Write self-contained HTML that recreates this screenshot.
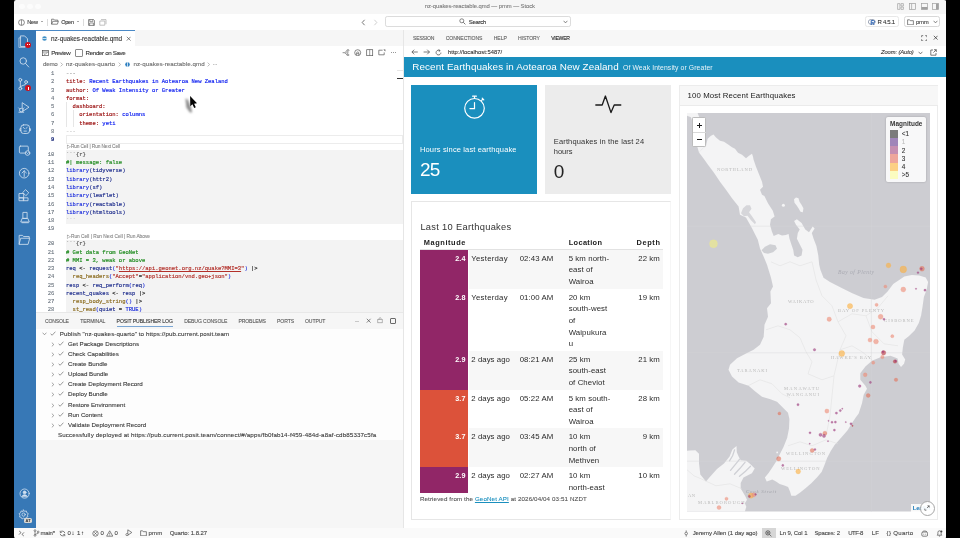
<!DOCTYPE html><html lang="en"><head><meta charset="utf-8"><title>nz-quakes-reactable.qmd — pmm — Stock</title><style>
html,body{margin:0;padding:0;background:#000;}
body{width:960px;height:538px;position:relative;overflow:hidden;font-family:"Liberation Sans",sans-serif;}
.a{position:absolute;display:block}
.t{position:absolute;white-space:pre;}
</style></head><body><div id="win" style="position:absolute;left:0;top:0;width:960px;height:538px;will-change:transform"><div class="a" style="left:14px;top:0px;width:932px;height:538px;background:#ffffff;"></div><div class="a" style="left:14px;top:0px;width:932px;height:13.9px;background:#f6f6f6;"></div><div class="a" style="left:19.4px;top:3.6px;width:5.2px;height:5.2px;border-radius:50%;background:#fcfcfc"></div><div class="a" style="left:27.4px;top:3.6px;width:5.2px;height:5.2px;border-radius:50%;background:#fcfcfc"></div><div class="a" style="left:35.4px;top:3.6px;width:5.2px;height:5.2px;border-radius:50%;background:#fcfcfc"></div><span class="t" style="top:3px;font-size:5.9px;line-height:6px;color:#7c7c7c;letter-spacing:-0.067px;-webkit-text-stroke:0.1px;left:424.8px;">nz-quakes-reactable.qmd — pmm — Stock</span><svg class="a" style="left:897.0px;top:3px" width="7" height="7" viewBox="0 0 7 7"><path d="M0.6 0.6h2.3v5.8h-2.3z M4 0.6h2.4v2.4h-2.4z M4 4h2.4v2.4h-2.4z" fill="none" stroke="#a0a0a0" stroke-width="0.7"/></svg><svg class="a" style="left:908.5px;top:3px" width="7" height="7" viewBox="0 0 7 7"><rect x="0.5" y="0.6" width="6" height="5.8" fill="none" stroke="#a0a0a0" stroke-width="0.7"/><path d="M2.6 0.6v5.8" stroke="#a0a0a0" stroke-width="0.7"/></svg><svg class="a" style="left:920.7px;top:3px" width="7" height="7" viewBox="0 0 7 7"><rect x="0.5" y="0.6" width="6" height="5.8" fill="none" stroke="#a0a0a0" stroke-width="0.7"/><rect x="0.5" y="4" width="6" height="2.4" fill="#a0a0a0"/></svg><svg class="a" style="left:932.2px;top:3px" width="7" height="7" viewBox="0 0 7 7"><rect x="0.5" y="0.6" width="6" height="5.8" fill="none" stroke="#a0a0a0" stroke-width="0.7"/><rect x="4" y="0.6" width="2.5" height="5.8" fill="#a0a0a0"/></svg><div class="a" style="left:14px;top:13.9px;width:932px;height:16.1px;background:#ffffff;"></div><svg class="a" style="left:17.6px;top:18.6px" width="7" height="7" viewBox="0 0 7 7"><circle cx="3.5" cy="3.5" r="2.9" fill="none" stroke="#555" stroke-width="0.7"/><path d="M3.5 0.8v5.4" stroke="#555" stroke-width="0.6"/></svg><span class="t" style="top:19px;font-size:5.6px;line-height:6px;color:#333;letter-spacing:-0.202px;-webkit-text-stroke:0.1px;left:27.2px;">New</span><div class="a" style="left:40.6px;top:21.4px;border-left:1.3px solid transparent;border-right:1.3px solid transparent;border-top:1.6px solid #555"></div><div class="a" style="left:47.2px;top:18.5px;width:0.5px;height:7.5px;background:#dcdcdc;"></div><svg class="a" style="left:51.2px;top:18.4px" width="8" height="7" viewBox="0 0 8 7"><path d="M0.6 6.2v-5h2.2l0.8 0.9h3.2v1.2M0.6 6.2l1.2-2.9h5.6l-1 2.9z" fill="none" stroke="#555" stroke-width="0.7" stroke-linejoin="round"/></svg><span class="t" style="top:19px;font-size:5.6px;line-height:6px;color:#333;letter-spacing:-0.329px;-webkit-text-stroke:0.1px;left:61.3px;">Open</span><div class="a" style="left:76.6px;top:21.4px;border-left:1.3px solid transparent;border-right:1.3px solid transparent;border-top:1.6px solid #555"></div><div class="a" style="left:83.3px;top:18.5px;width:0.5px;height:7.5px;background:#dcdcdc;"></div><svg class="a" style="left:87.6px;top:18.6px" width="7" height="7" viewBox="0 0 7 7"><path d="M0.6 0.6h5l0.8 0.8v5h-5.8z" fill="none" stroke="#555" stroke-width="0.7"/><path d="M1.8 0.6v2h3v-2M1.6 6.4v-2.4h3.8v2.4" fill="none" stroke="#555" stroke-width="0.6"/></svg><svg class="a" style="left:99.2px;top:18.4px" width="8" height="8" viewBox="0 0 8 8"><path d="M2 1.6h5v4.6M0.8 3h5v4.2h-5z" fill="none" stroke="#a8a8a8" stroke-width="0.7"/></svg><svg class="a" style="left:360.5px;top:18.7px" width="5" height="7" viewBox="0 0 5 7"><path d="M3.6 0.8L1.2 3.5L3.6 6.2" fill="none" stroke="#555" stroke-width="0.8"/></svg><svg class="a" style="left:372.7px;top:18.7px" width="5" height="7" viewBox="0 0 5 7"><path d="M1.4 0.8L3.8 3.5L1.4 6.2" fill="none" stroke="#c4c4c4" stroke-width="0.8"/></svg><div class="a" style="left:385.2px;top:16.3px;width:185.8px;height:10.7px;box-sizing:border-box;border:0.7px solid #dcdcdc;border-radius:2.2px;background:#fff"></div><svg class="a" style="left:459px;top:18.4px" width="7" height="7" viewBox="0 0 7 7"><circle cx="2.8" cy="2.8" r="2" fill="none" stroke="#555" stroke-width="0.7"/><path d="M4.3 4.3L6.4 6.4" stroke="#555" stroke-width="0.8"/></svg><span class="t" style="top:19px;font-size:6px;line-height:6px;color:#333;letter-spacing:-0.283px;-webkit-text-stroke:0.1px;left:468.7px;">Search</span><svg class="a" style="left:562.9px;top:19.7px" width="5" height="4" viewBox="0 0 5 4"><path d="M0.6 0.8L2.5 2.9L4.4 0.8" fill="none" stroke="#555" stroke-width="0.7"/></svg><div class="a" style="left:864.5px;top:16.3px;width:34.3px;height:11px;box-sizing:border-box;border:0.7px solid #e8e8e8;border-radius:2.4px;background:#fff"></div><svg class="a" style="left:868px;top:18.8px" width="8" height="6.6" viewBox="0 0 8 6.6"><ellipse cx="3.8" cy="2.9" rx="3.5" ry="2.5" fill="none" stroke="#9aa3b5" stroke-width="1"/><path d="M3.2 1.6h2.3a1.1 1.1 0 0 1 0 2.2h-2.3zM3.2 3.8v2.4M4.6 3.8l1.7 2.4" fill="none" stroke="#2c63b3" stroke-width="1"/></svg><span class="t" style="top:19px;font-size:6px;line-height:6px;color:#333;letter-spacing:-0.31px;-webkit-text-stroke:0.1px;left:877.5px;">R 4.5.1</span><div class="a" style="left:903.8px;top:16.3px;width:36.6px;height:11px;box-sizing:border-box;border:0.7px solid #d8d8d8;border-radius:2.4px;background:#fff"></div><svg class="a" style="left:907.2px;top:18.9px" width="7" height="6.4" viewBox="0 0 7 6.4"><path d="M0.6 5.8v-5h2l0.7 0.9h3.1v4.1z" fill="none" stroke="#555" stroke-width="0.7" stroke-linejoin="round"/></svg><span class="t" style="top:19px;font-size:6px;line-height:6px;color:#444;letter-spacing:-0.322px;-webkit-text-stroke:0.1px;left:916px;">pmm</span><svg class="a" style="left:932.5px;top:20.2px" width="5" height="4" viewBox="0 0 5 4"><path d="M0.6 0.8L2.5 2.9L4.4 0.8" fill="none" stroke="#555" stroke-width="0.7"/></svg><div class="a" style="left:14px;top:30px;width:21.8px;height:497.8px;background:#3778b6;"></div><svg class="a" style="left:16.4px;top:33.6px" width="14.399999999999999" height="14.399999999999999" viewBox="0 0 12 12" fill="none" stroke="#d3e1f0" stroke-width="0.7" stroke-linecap="round" stroke-linejoin="round"><path d="M4 1.6h3.2l2.4 2.4v6.4h-5.6z"/><path d="M4 3.2h-1.6v8h5.2v-0.8" opacity="0.75"/></svg><div class="a" style="left:25.3px;top:41.7px;width:6px;height:6px;border-radius:50%;background:#d2101c"></div><div class="a" style="left:27.0px;top:44px;width:1.1px;height:1.4px;background:#fff"></div><div class="a" style="left:28.7px;top:44px;width:1.1px;height:1.4px;background:#fff"></div><svg class="a" style="left:17.0px;top:54.8px" width="14.399999999999999" height="14.399999999999999" viewBox="0 0 12 12" fill="none" stroke="#d3e1f0" stroke-width="0.7" stroke-linecap="round" stroke-linejoin="round"><circle cx="5.2" cy="5" r="2.7"/><path d="M7.2 7.1L9.8 10"/></svg><svg class="a" style="left:16.4px;top:77.3px" width="14.399999999999999" height="14.399999999999999" viewBox="0 0 12 12" fill="none" stroke="#d3e1f0" stroke-width="0.7" stroke-linecap="round" stroke-linejoin="round"><circle cx="3.6" cy="2.4" r="1.2"/><circle cx="3.6" cy="9.6" r="1.2"/><circle cx="8.4" cy="4.2" r="1.2"/><path d="M3.6 3.6v4.8M8.4 5.4c0 2-4.8 1.4-4.8 2.8"/></svg><div class="a" style="left:25.3px;top:85.4px;width:6px;height:6px;border-radius:50%;background:#d2101c"></div><div class="a" style="left:27.6px;top:87.2px;width:1.4px;height:2.4px;background:#fff"></div><svg class="a" style="left:17.4px;top:99.8px" width="14.399999999999999" height="14.399999999999999" viewBox="0 0 12 12" fill="none" stroke="#d3e1f0" stroke-width="0.7" stroke-linecap="round" stroke-linejoin="round"><path d="M4.6 2.4l5.4 3.6l-5.4 3.6z"/><circle cx="3.6" cy="8.4" r="1.5" fill="#3778b6"/><path d="M1.6 10.2h4M2 7.2l-0.6-0.6M5.2 7.2l0.6-0.6"/></svg><svg class="a" style="left:17.5px;top:121.6px" width="14.399999999999999" height="14.399999999999999" viewBox="0 0 12 12" fill="none" stroke="#d3e1f0" stroke-width="0.7" stroke-linecap="round" stroke-linejoin="round"><rect x="2.4" y="2.4" width="7.2" height="7.2" rx="2.2"/><path d="M4.3 4.5l1.1 0.9M7.7 4.5l-1.1 0.9M5 7.6h2M2.4 5.6h-0.8v1.6h0.8M9.6 5.6h0.8v1.6h-0.8"/></svg><svg class="a" style="left:16.8px;top:143.2px" width="14.399999999999999" height="14.399999999999999" viewBox="0 0 12 12" fill="none" stroke="#d3e1f0" stroke-width="0.7" stroke-linecap="round" stroke-linejoin="round"><rect x="2" y="2.6" width="7.4" height="5.8" rx="0.8"/><circle cx="8.8" cy="8.4" r="1.9" fill="#3778b6"/><path d="M8 8l0.8 0.8l0.8-0.8"/></svg><svg class="a" style="left:17.0px;top:165.7px" width="14.399999999999999" height="14.399999999999999" viewBox="0 0 12 12" fill="none" stroke="#d3e1f0" stroke-width="0.7" stroke-linecap="round" stroke-linejoin="round"><circle cx="6" cy="6" r="4"/><path d="M6 8.8V4M4.2 5.8L6 4L7.8 5.8"/></svg><svg class="a" style="left:17.1px;top:187.7px" width="14.399999999999999" height="14.399999999999999" viewBox="0 0 12 12" fill="none" stroke="#d3e1f0" stroke-width="0.7" stroke-linecap="round" stroke-linejoin="round"><path d="M2 4.6h3.6v3.6h-3.6zM2 8.2h3.6v2.4h-3.6zM5.6 8.2h3.6v2.4h-3.6zM7.4 1.6l2.4 2.4l-2.4 2.4l-2.4-2.4z"/></svg><svg class="a" style="left:17.5px;top:209.8px" width="14.399999999999999" height="14.399999999999999" viewBox="0 0 12 12" fill="none" stroke="#d3e1f0" stroke-width="0.7" stroke-linecap="round" stroke-linejoin="round"><path d="M4.4 2h3.2v5h-3.2zM2.6 10h6.8l-1.2-3h-4.4zM3.4 10.6h5.2"/></svg><svg class="a" style="left:17.4px;top:232.0px" width="14.399999999999999" height="14.399999999999999" viewBox="0 0 12 12" fill="none" stroke="#d3e1f0" stroke-width="0.7" stroke-linecap="round" stroke-linejoin="round"><path d="M1.8 10v-7.2h2.8l0.9 1h4.7v1.4M1.8 10l1.3-4.8h7.5l-1.3 4.8z"/></svg><svg class="a" style="left:18.1px;top:487.2px" width="13.200000000000001" height="13.200000000000001" viewBox="0 0 12 12" fill="none" stroke="#d3e1f0" stroke-width="0.7" stroke-linecap="round" stroke-linejoin="round"><circle cx="6" cy="6" r="4.2"/><circle cx="6" cy="4.9" r="1.3" fill="#d3e1f0"/><path d="M3.6 8.5c0.6-1.9 4.2-1.9 4.8 0z" fill="#d3e1f0"/></svg><svg class="a" style="left:17.2px;top:508.0px" width="13.200000000000001" height="13.200000000000001" viewBox="0 0 12 12" fill="none" stroke="#d3e1f0" stroke-width="0.7" stroke-linecap="round" stroke-linejoin="round"><circle cx="6" cy="6" r="1.5"/><path d="M6 1.8l0.9 1.3l1.6-0.4l0.4 1.6l1.4 0.8l-0.8 1.4l0.4 1.6l-1.5 0.4l-0.8 1.5l-1.5-0.8l-1.5 0.8l-0.8-1.5l-1.5-0.4l0.4-1.6l-0.8-1.4l1.4-0.8l0.4-1.6l1.5 0.4z"/></svg><div class="a" style="left:24.2px;top:517.6px;width:7.8px;height:5.4px;border-radius:1.6px;background:#d9d7d3"></div><span class="t" style="top:518px;font-size:4px;line-height:5px;color:#333;font-weight:700;letter-spacing:0.353px;left:25.4px;">AT</span><div class="a" style="left:14px;top:527.6px;width:932px;height:10.4px;background:#fafafa;"></div><svg class="a" style="left:18px;top:529.6px" width="7" height="7" viewBox="0 0 7 7"><path d="M1 4.6L3 2.6M3 2.6L1.2 1M4 4.4L6 2.4M4 4.4L5.8 6" fill="none" stroke="#444" stroke-width="0.7"/></svg><svg class="a" style="left:32.6px;top:529.2px" width="7" height="8" viewBox="0 0 7 8"><circle cx="2" cy="1.6" r="0.9" fill="none" stroke="#444" stroke-width="0.6"/><circle cx="2" cy="6.4" r="0.9" fill="none" stroke="#444" stroke-width="0.6"/><circle cx="5.2" cy="3" r="0.9" fill="none" stroke="#444" stroke-width="0.6"/><path d="M2 2.5v3M5.2 3.9c0 1.4-3.2 0.6-3.2 1.8" fill="none" stroke="#444" stroke-width="0.6"/></svg><span class="t" style="top:530px;font-size:6px;line-height:6px;color:#444;letter-spacing:-0.236px;-webkit-text-stroke:0.1px;left:40.6px;">main*</span><svg class="a" style="left:58.6px;top:529.6px" width="7" height="7" viewBox="0 0 7 7"><path d="M5.8 3.2a2.4 2.4 0 0 0-4.4-1M1.2 3.8a2.4 2.4 0 0 0 4.4 1M1.2 0.8v1.6h1.6M5.8 6.2v-1.6h-1.6" fill="none" stroke="#444" stroke-width="0.65"/></svg><span class="t" style="top:530px;font-size:6px;line-height:6px;color:#444;letter-spacing:0.539px;-webkit-text-stroke:0.1px;left:67.5px;">0↓ 1↑</span><svg class="a" style="left:92px;top:529.6px" width="7" height="7" viewBox="0 0 7 7"><circle cx="3.5" cy="3.5" r="2.7" fill="none" stroke="#444" stroke-width="0.65"/><path d="M2.2 2.2l2.6 2.6M4.8 2.2l-2.6 2.6" stroke="#444" stroke-width="0.6"/></svg><span class="t" style="top:530px;font-size:6px;line-height:6px;color:#444;-webkit-text-stroke:0.1px;left:100.6px;">0</span><svg class="a" style="left:105.8px;top:529.6px" width="7.4" height="7" viewBox="0 0 7.4 7"><path d="M3.7 0.8L6.8 6.2H0.6z" fill="none" stroke="#444" stroke-width="0.65" stroke-linejoin="round"/><path d="M3.7 2.8v1.8M3.7 5.1v0.5" stroke="#444" stroke-width="0.6"/></svg><span class="t" style="top:530px;font-size:6px;line-height:6px;color:#444;-webkit-text-stroke:0.1px;left:114.6px;">0</span><svg class="a" style="left:124.8px;top:529.4px" width="8" height="7.4" viewBox="0 0 8 7.4"><path d="M2.8 0.8l4 2.7l-4 2.7z" fill="none" stroke="#444" stroke-width="0.65" stroke-linejoin="round"/><circle cx="2" cy="5.6" r="1.1" fill="#fff" stroke="#444" stroke-width="0.6"/></svg><svg class="a" style="left:139.6px;top:529.8px" width="7" height="6.4" viewBox="0 0 7 6.4"><path d="M0.6 5.8v-5h2l0.7 0.9h3.1v4.1z" fill="none" stroke="#444" stroke-width="0.65" stroke-linejoin="round"/></svg><span class="t" style="top:530px;font-size:6px;line-height:6px;color:#444;letter-spacing:0.178px;-webkit-text-stroke:0.1px;left:148.5px;">pmm</span><span class="t" style="top:530px;font-size:6px;line-height:6px;color:#444;letter-spacing:-0.066px;-webkit-text-stroke:0.1px;left:169.7px;">Quarto: 1.8.27</span><svg class="a" style="left:683.4px;top:529.6px" width="6.4" height="7" viewBox="0 0 6.4 7"><circle cx="3.2" cy="3.5" r="1.3" fill="none" stroke="#444" stroke-width="0.6"/><path d="M3.2 0.4v1.8M3.2 4.8v1.8" stroke="#444" stroke-width="0.6"/></svg><span class="t" style="top:530px;font-size:6px;line-height:6px;color:#444;letter-spacing:-0.064px;-webkit-text-stroke:0.1px;left:692.7px;">Jeremy Allen (1 day ago)</span><div class="a" style="left:761.5px;top:528px;width:14.2px;height:10px;background:#d6d6d6;"></div><svg class="a" style="left:765.2px;top:529.6px" width="7" height="7" viewBox="0 0 7 7"><circle cx="2.9" cy="2.9" r="2.1" fill="none" stroke="#333" stroke-width="0.7"/><path d="M4.5 4.5L6.4 6.4M1.9 2.9h2M2.9 1.9v2" stroke="#333" stroke-width="0.6"/></svg><span class="t" style="top:530px;font-size:6px;line-height:6px;color:#444;letter-spacing:-0.093px;-webkit-text-stroke:0.1px;left:779.4px;">Ln 9, Col 1</span><span class="t" style="top:530px;font-size:6px;line-height:6px;color:#444;letter-spacing:-0.136px;-webkit-text-stroke:0.1px;left:814.4px;">Spaces: 2</span><span class="t" style="top:530px;font-size:6px;line-height:6px;color:#444;letter-spacing:-0.45px;-webkit-text-stroke:0.1px;left:848.2px;">UTF-8</span><span class="t" style="top:530px;font-size:6px;line-height:6px;color:#444;letter-spacing:0.184px;-webkit-text-stroke:0.1px;left:871.8px;">LF</span><span class="t" style="top:530px;font-size:6px;line-height:6px;color:#444;letter-spacing:0.321px;-webkit-text-stroke:0.1px;left:886.6px;">{} Quarto</span><svg class="a" style="left:921px;top:529.6px" width="7.4" height="7" viewBox="0 0 7.4 7"><rect x="0.8" y="2" width="5.8" height="4.2" rx="1.2" fill="none" stroke="#444" stroke-width="0.65"/><path d="M1.4 2c0.4-1.4 4.2-1.4 4.6 0M2.7 3.8v0.8M4.7 3.8v0.8" fill="none" stroke="#444" stroke-width="0.6"/></svg><svg class="a" style="left:936.4px;top:529.6px" width="7" height="7" viewBox="0 0 7 7"><path d="M1.2 5.2h4.6l-0.7-1v-1.8a1.6 1.6 0 0 0-3.2 0v1.8zM2.9 6.1h1.2" fill="none" stroke="#444" stroke-width="0.65" stroke-linejoin="round"/><circle cx="5.4" cy="1.5" r="1" fill="#444"/></svg><div class="a" style="left:35.8px;top:30px;width:367.8px;height:15.8px;background:#f6f6f6;"></div><div class="a" style="left:35.8px;top:30px;width:99.0px;height:15.8px;background:#ffffff;"></div><div class="a" style="left:35.8px;top:30px;width:99.0px;height:0.9px;background:#4a89c6;"></div><svg class="a" style="left:42.4px;top:36.2px" width="5" height="5" viewBox="0 0 5 5"><circle cx="2.5" cy="2.5" r="2.3" fill="#3d8fc6"/><path d="M0.2 2.5h4.6" stroke="#fff" stroke-width="0.7"/></svg><span class="t" style="top:35px;font-size:6.4px;line-height:7px;color:#333;letter-spacing:-0.047px;-webkit-text-stroke:0.1px;left:50.9px;">nz-quakes-reactable.qmd</span><svg class="a" style="left:126px;top:36px" width="5.4" height="5.4" viewBox="0 0 5.4 5.4"><path d="M0.8 0.8l3.8 3.8M4.6 0.8l-3.8 3.8" stroke="#444" stroke-width="0.65"/></svg><div class="a" style="left:35.8px;top:45.8px;width:367.8px;height:266.8px;background:#ffffff;"></div><svg class="a" style="left:41.8px;top:49.9px" width="7" height="6.4" viewBox="0 0 7 6.4"><rect x="0.5" y="0.5" width="6" height="5.2" fill="none" stroke="#444" stroke-width="0.65"/><path d="M0.5 2h6M1.6 3.2l1.4 1.4l2.2-2.2" fill="none" stroke="#444" stroke-width="0.6"/></svg><span class="t" style="top:49px;font-size:6.2px;line-height:7px;color:#333;letter-spacing:-0.403px;-webkit-text-stroke:0.1px;left:51.2px;">Preview</span><div class="a" style="left:75.2px;top:49.3px;width:7.6px;height:7.6px;box-sizing:border-box;border:0.6px solid #8a8a8a;border-radius:1px;background:#fff"></div><span class="t" style="top:49px;font-size:6.2px;line-height:7px;color:#333;letter-spacing:-0.348px;-webkit-text-stroke:0.1px;left:85.6px;">Render on Save</span><svg class="a" style="left:342.4px;top:49px" width="8" height="7.4" viewBox="0 0 8 7.4"><path d="M0.6 3.7h2.2M2.8 3.7L5 1.6M2.8 3.7L5 5.8" stroke="#555" stroke-width="0.65" fill="none"/><circle cx="6" cy="1.4" r="0.9" fill="none" stroke="#555" stroke-width="0.6"/><circle cx="6" cy="6" r="0.9" fill="none" stroke="#555" stroke-width="0.6"/><circle cx="5.4" cy="3.7" r="0.7" fill="none" stroke="#555" stroke-width="0.5"/></svg><svg class="a" style="left:354.4px;top:49px" width="7.4" height="7.4" viewBox="0 0 7.4 7.4"><circle cx="3.7" cy="3.7" r="3" fill="none" stroke="#555" stroke-width="0.7"/><path d="M2.6 6.2v-2.2a1.1 1.1 0 0 1 2.2 0v2.2M2.6 4.6h2.2" fill="none" stroke="#555" stroke-width="0.6"/></svg><svg class="a" style="left:366.2px;top:49px" width="7.4" height="7.4" viewBox="0 0 7.4 7.4"><rect x="0.7" y="0.7" width="6" height="6" fill="none" stroke="#555" stroke-width="0.7"/><path d="M3.7 0.7v6" stroke="#555" stroke-width="0.6"/></svg><svg class="a" style="left:377.8px;top:49.4px" width="8" height="7" viewBox="0 0 8 7"><path d="M4.6 1.2h-3.8v4.6h5.4v-2.4" fill="none" stroke="#555" stroke-width="0.7"/><path d="M5.4 0.6h2v2z" fill="#555"/></svg><div class="a" style="left:390.9px;top:52.3px;width:0.9px;height:0.9px;border-radius:50%;background:#555"></div><div class="a" style="left:393.09999999999997px;top:52.3px;width:0.9px;height:0.9px;border-radius:50%;background:#555"></div><div class="a" style="left:395.29999999999995px;top:52.3px;width:0.9px;height:0.9px;border-radius:50%;background:#555"></div><span class="t" style="top:60px;font-size:6.2px;line-height:7px;color:#6b6b6b;letter-spacing:-0.228px;-webkit-text-stroke:0.1px;left:43px;">demo</span><svg class="a" style="left:60.4px;top:62px" width="3.4" height="5" viewBox="0 0 3.4 5"><path d="M0.7 0.6L2.6 2.5L0.7 4.4" fill="none" stroke="#8a8a8a" stroke-width="0.6"/></svg><span class="t" style="top:60px;font-size:6.2px;line-height:7px;color:#6b6b6b;letter-spacing:0.056px;-webkit-text-stroke:0.1px;left:66px;">nz-quakes-quarto</span><svg class="a" style="left:117.9px;top:62px" width="3.4" height="5" viewBox="0 0 3.4 5"><path d="M0.7 0.6L2.6 2.5L0.7 4.4" fill="none" stroke="#8a8a8a" stroke-width="0.6"/></svg><svg class="a" style="left:124.9px;top:62px" width="5" height="5" viewBox="0 0 5 5"><circle cx="2.5" cy="2.5" r="2.3" fill="#2d7fc0"/><path d="M2.5 0.2v4.6" stroke="#fff" stroke-width="0.7"/></svg><span class="t" style="top:60px;font-size:6.2px;line-height:7px;color:#6b6b6b;letter-spacing:0.071px;-webkit-text-stroke:0.1px;left:133.4px;">nz-quakes-reactable.qmd</span><svg class="a" style="left:207.0px;top:62px" width="3.4" height="5" viewBox="0 0 3.4 5"><path d="M0.7 0.6L2.6 2.5L0.7 4.4" fill="none" stroke="#8a8a8a" stroke-width="0.6"/></svg><span class="t" style="top:60px;font-size:6.2px;line-height:7px;color:#6b6b6b;letter-spacing:-0.494px;-webkit-text-stroke:0.1px;left:212.4px;">···</span><div class="a" style="left:66px;top:150px;width:337.4px;height:74.2px;background:#f3f3f3;"></div><div class="a" style="left:66px;top:239.9px;width:337.4px;height:72.7px;background:#f3f3f3;"></div><div class="a" style="left:66px;top:135.4px;width:337.4px;height:8.2px;box-sizing:border-box;border:0.6px solid #ececec;background:#fff"></div><div class="a" style="left:66px;top:102px;width:0.4px;height:24.8px;background:#e6e6e6;"></div><div class="a" style="left:72.6px;top:110.2px;width:0.4px;height:16.6px;background:#e6e6e6;"></div><div class="a" style="left:397px;top:77.9px;width:6.4px;height:0.8px;background:#333;"></div><div class="a" style="left:397px;top:69.6px;width:6.4px;height:0.4px;background:#e6e6e6;"></div><span class="t" style="top:70px;font-size:5.5px;line-height:7px;color:#6e7781;font-family:'Liberation Mono', monospace;left:51.096px;-webkit-text-stroke:0.12px;">1</span><span class="t" style="top:70px;font-size:5.5px;line-height:7px;color:#333;font-family:'Liberation Mono', monospace;letter-spacing:0.003px;left:66px;-webkit-text-stroke:0.16px;"><span style="color:#8a8a8a">---</span></span><span class="t" style="top:78px;font-size:5.5px;line-height:7px;color:#6e7781;font-family:'Liberation Mono', monospace;left:51.096px;-webkit-text-stroke:0.12px;">2</span><span class="t" style="top:78px;font-size:5.5px;line-height:7px;color:#333;font-family:'Liberation Mono', monospace;letter-spacing:0.003px;left:66px;-webkit-text-stroke:0.16px;"><span style="color:#9a0f0f">title:</span><span style="color:#0a1cf0"> Recent Earthquakes in Aotearoa New Zealand</span></span><span class="t" style="top:87px;font-size:5.5px;line-height:7px;color:#6e7781;font-family:'Liberation Mono', monospace;left:51.096px;-webkit-text-stroke:0.12px;">3</span><span class="t" style="top:87px;font-size:5.5px;line-height:7px;color:#333;font-family:'Liberation Mono', monospace;letter-spacing:0.003px;left:66px;-webkit-text-stroke:0.16px;"><span style="color:#9a0f0f">author:</span><span style="color:#0a1cf0"> Of Weak Intensity or Greater</span></span><span class="t" style="top:95px;font-size:5.5px;line-height:7px;color:#6e7781;font-family:'Liberation Mono', monospace;left:51.096px;-webkit-text-stroke:0.12px;">4</span><span class="t" style="top:95px;font-size:5.5px;line-height:7px;color:#333;font-family:'Liberation Mono', monospace;letter-spacing:0.003px;left:66px;-webkit-text-stroke:0.16px;"><span style="color:#9a0f0f">format:</span></span><span class="t" style="top:103px;font-size:5.5px;line-height:7px;color:#6e7781;font-family:'Liberation Mono', monospace;left:51.096px;-webkit-text-stroke:0.12px;">5</span><span class="t" style="top:103px;font-size:5.5px;line-height:7px;color:#333;font-family:'Liberation Mono', monospace;letter-spacing:0.004px;left:66px;-webkit-text-stroke:0.16px;"><span style="color:#9a0f0f">  dashboard:</span></span><span class="t" style="top:111px;font-size:5.5px;line-height:7px;color:#6e7781;font-family:'Liberation Mono', monospace;left:51.096px;-webkit-text-stroke:0.12px;">6</span><span class="t" style="top:111px;font-size:5.5px;line-height:7px;color:#333;font-family:'Liberation Mono', monospace;letter-spacing:0.003px;left:66px;-webkit-text-stroke:0.16px;"><span style="color:#9a0f0f">    orientation:</span><span style="color:#0a1cf0"> columns</span></span><span class="t" style="top:120px;font-size:5.5px;line-height:7px;color:#6e7781;font-family:'Liberation Mono', monospace;left:51.096px;-webkit-text-stroke:0.12px;">7</span><span class="t" style="top:120px;font-size:5.5px;line-height:7px;color:#333;font-family:'Liberation Mono', monospace;letter-spacing:0.002px;left:66px;-webkit-text-stroke:0.16px;"><span style="color:#9a0f0f">    theme:</span><span style="color:#0a1cf0"> yeti</span></span><span class="t" style="top:128px;font-size:5.5px;line-height:7px;color:#6e7781;font-family:'Liberation Mono', monospace;left:51.096px;-webkit-text-stroke:0.12px;">8</span><span class="t" style="top:128px;font-size:5.5px;line-height:7px;color:#333;font-family:'Liberation Mono', monospace;letter-spacing:0.003px;left:66px;-webkit-text-stroke:0.16px;"><span style="color:#c0c0c0">---</span></span><span class="t" style="top:136px;font-size:5.5px;line-height:7px;color:#1a2a7a;font-weight:700;font-family:'Liberation Mono', monospace;left:51.096px;-webkit-text-stroke:0.12px;">9</span><span class="t" style="top:151px;font-size:5.5px;line-height:7px;color:#6e7781;font-family:'Liberation Mono', monospace;letter-spacing:-0.001px;left:47.792px;-webkit-text-stroke:0.12px;">10</span><span class="t" style="top:151px;font-size:5.5px;line-height:7px;color:#333;font-family:'Liberation Mono', monospace;letter-spacing:0.002px;left:66px;-webkit-text-stroke:0.16px;"><span style="color:#555">```{r}</span></span><span class="t" style="top:159px;font-size:5.5px;line-height:7px;color:#6e7781;font-family:'Liberation Mono', monospace;letter-spacing:-0.001px;left:47.792px;-webkit-text-stroke:0.12px;">11</span><span class="t" style="top:159px;font-size:5.5px;line-height:7px;color:#333;font-family:'Liberation Mono', monospace;letter-spacing:0.004px;left:66px;-webkit-text-stroke:0.16px;"><span style="color:#1d8a1d">#| message: false</span></span><span class="t" style="top:167px;font-size:5.5px;line-height:7px;color:#6e7781;font-family:'Liberation Mono', monospace;letter-spacing:-0.001px;left:47.792px;-webkit-text-stroke:0.12px;">12</span><span class="t" style="top:167px;font-size:5.5px;line-height:7px;color:#333;font-family:'Liberation Mono', monospace;letter-spacing:0.003px;left:66px;-webkit-text-stroke:0.16px;"><span style="color:#2233dd">library</span><span style="color:#1d2c8c">(tidyverse)</span></span><span class="t" style="top:176px;font-size:5.5px;line-height:7px;color:#6e7781;font-family:'Liberation Mono', monospace;letter-spacing:-0.001px;left:47.792px;-webkit-text-stroke:0.12px;">13</span><span class="t" style="top:176px;font-size:5.5px;line-height:7px;color:#333;font-family:'Liberation Mono', monospace;letter-spacing:0.003px;left:66px;-webkit-text-stroke:0.16px;"><span style="color:#2233dd">library</span><span style="color:#1d2c8c">(httr2)</span></span><span class="t" style="top:184px;font-size:5.5px;line-height:7px;color:#6e7781;font-family:'Liberation Mono', monospace;letter-spacing:-0.001px;left:47.792px;-webkit-text-stroke:0.12px;">14</span><span class="t" style="top:184px;font-size:5.5px;line-height:7px;color:#333;font-family:'Liberation Mono', monospace;letter-spacing:0.003px;left:66px;-webkit-text-stroke:0.16px;"><span style="color:#2233dd">library</span><span style="color:#1d2c8c">(sf)</span></span><span class="t" style="top:192px;font-size:5.5px;line-height:7px;color:#6e7781;font-family:'Liberation Mono', monospace;letter-spacing:-0.001px;left:47.792px;-webkit-text-stroke:0.12px;">15</span><span class="t" style="top:192px;font-size:5.5px;line-height:7px;color:#333;font-family:'Liberation Mono', monospace;letter-spacing:0.002px;left:66px;-webkit-text-stroke:0.16px;"><span style="color:#2233dd">library</span><span style="color:#1d2c8c">(leaflet)</span></span><span class="t" style="top:201px;font-size:5.5px;line-height:7px;color:#6e7781;font-family:'Liberation Mono', monospace;letter-spacing:-0.001px;left:47.792px;-webkit-text-stroke:0.12px;">16</span><span class="t" style="top:201px;font-size:5.5px;line-height:7px;color:#333;font-family:'Liberation Mono', monospace;letter-spacing:0.003px;left:66px;-webkit-text-stroke:0.16px;"><span style="color:#2233dd">library</span><span style="color:#1d2c8c">(reactable)</span></span><span class="t" style="top:209px;font-size:5.5px;line-height:7px;color:#6e7781;font-family:'Liberation Mono', monospace;letter-spacing:-0.001px;left:47.792px;-webkit-text-stroke:0.12px;">17</span><span class="t" style="top:209px;font-size:5.5px;line-height:7px;color:#333;font-family:'Liberation Mono', monospace;letter-spacing:0.003px;left:66px;-webkit-text-stroke:0.16px;"><span style="color:#2233dd">library</span><span style="color:#1d2c8c">(htmltools)</span></span><span class="t" style="top:217px;font-size:5.5px;line-height:7px;color:#6e7781;font-family:'Liberation Mono', monospace;letter-spacing:-0.001px;left:47.792px;-webkit-text-stroke:0.12px;">18</span><span class="t" style="top:217px;font-size:5.5px;line-height:7px;color:#333;font-family:'Liberation Mono', monospace;letter-spacing:0.003px;left:66px;-webkit-text-stroke:0.16px;"><span style="color:#9a9a9a">```</span></span><span class="t" style="top:225px;font-size:5.5px;line-height:7px;color:#6e7781;font-family:'Liberation Mono', monospace;letter-spacing:-0.001px;left:47.792px;-webkit-text-stroke:0.12px;">19</span><span class="t" style="top:240px;font-size:5.5px;line-height:7px;color:#6e7781;font-family:'Liberation Mono', monospace;letter-spacing:-0.001px;left:47.792px;-webkit-text-stroke:0.12px;">20</span><span class="t" style="top:240px;font-size:5.5px;line-height:7px;color:#333;font-family:'Liberation Mono', monospace;letter-spacing:0.002px;left:66px;-webkit-text-stroke:0.16px;"><span style="color:#555">```{r}</span></span><span class="t" style="top:249px;font-size:5.5px;line-height:7px;color:#6e7781;font-family:'Liberation Mono', monospace;letter-spacing:-0.001px;left:47.792px;-webkit-text-stroke:0.12px;">21</span><span class="t" style="top:249px;font-size:5.5px;line-height:7px;color:#333;font-family:'Liberation Mono', monospace;letter-spacing:0.003px;left:66px;-webkit-text-stroke:0.16px;"><span style="color:#1d8a1d"># Get data from GeoNet</span></span><span class="t" style="top:257px;font-size:5.5px;line-height:7px;color:#6e7781;font-family:'Liberation Mono', monospace;letter-spacing:-0.001px;left:47.792px;-webkit-text-stroke:0.12px;">22</span><span class="t" style="top:257px;font-size:5.5px;line-height:7px;color:#333;font-family:'Liberation Mono', monospace;letter-spacing:0.003px;left:66px;-webkit-text-stroke:0.16px;"><span style="color:#1d8a1d"># MMI = 3, weak or above</span></span><span class="t" style="top:265px;font-size:5.5px;line-height:7px;color:#6e7781;font-family:'Liberation Mono', monospace;letter-spacing:-0.001px;left:47.792px;-webkit-text-stroke:0.12px;">23</span><span class="t" style="top:265px;font-size:5.5px;line-height:7px;color:#333;font-family:'Liberation Mono', monospace;letter-spacing:0.002px;left:66px;-webkit-text-stroke:0.16px;"><span style="color:#1d2c8c">req</span><span style="color:#2a2a2a"> &lt;- </span><span style="color:#1d2c8c">request</span><span style="color:#2233dd">(</span><span style="color:#b3302a">&quot;</span><span style="color:#b3302a;text-decoration:underline;text-decoration-thickness:0.6px;text-underline-offset:1.2px">https://api.geonet.org.nz/quake?MMI=3</span><span style="color:#b3302a">&quot;</span><span style="color:#2233dd">)</span><span style="color:#2a2a2a"> |&gt;</span></span><span class="t" style="top:273px;font-size:5.5px;line-height:7px;color:#6e7781;font-family:'Liberation Mono', monospace;letter-spacing:-0.001px;left:47.792px;-webkit-text-stroke:0.12px;">24</span><span class="t" style="top:273px;font-size:5.5px;line-height:7px;color:#333;font-family:'Liberation Mono', monospace;letter-spacing:0.002px;left:66px;-webkit-text-stroke:0.16px;"><span style="color:#8a6a1c">  req_headers</span><span style="color:#2233dd">(</span><span style="color:#b3302a">&quot;Accept&quot;</span><span style="color:#2a2a2a">=</span><span style="color:#b3302a">&quot;application/vnd.geo+json&quot;</span><span style="color:#2233dd">)</span></span><span class="t" style="top:282px;font-size:5.5px;line-height:7px;color:#6e7781;font-family:'Liberation Mono', monospace;letter-spacing:-0.001px;left:47.792px;-webkit-text-stroke:0.12px;">25</span><span class="t" style="top:282px;font-size:5.5px;line-height:7px;color:#333;font-family:'Liberation Mono', monospace;letter-spacing:0.002px;left:66px;-webkit-text-stroke:0.16px;"><span style="color:#1d2c8c">resp</span><span style="color:#2a2a2a"> &lt;- </span><span style="color:#1d2c8c">req_perform</span><span style="color:#2233dd">(</span><span style="color:#1d2c8c">req</span><span style="color:#2233dd">)</span></span><span class="t" style="top:290px;font-size:5.5px;line-height:7px;color:#6e7781;font-family:'Liberation Mono', monospace;letter-spacing:-0.001px;left:47.792px;-webkit-text-stroke:0.12px;">26</span><span class="t" style="top:290px;font-size:5.5px;line-height:7px;color:#333;font-family:'Liberation Mono', monospace;letter-spacing:0.003px;left:66px;-webkit-text-stroke:0.16px;"><span style="color:#1d2c8c">recent_quakes</span><span style="color:#2a2a2a"> &lt;- </span><span style="color:#1d2c8c">resp</span><span style="color:#2a2a2a"> |&gt;</span></span><span class="t" style="top:298px;font-size:5.5px;line-height:7px;color:#6e7781;font-family:'Liberation Mono', monospace;letter-spacing:-0.001px;left:47.792px;-webkit-text-stroke:0.12px;">27</span><span class="t" style="top:298px;font-size:5.5px;line-height:7px;color:#333;font-family:'Liberation Mono', monospace;letter-spacing:0.002px;left:66px;-webkit-text-stroke:0.16px;"><span style="color:#8a6a1c">  resp_body_string</span><span style="color:#2233dd">()</span><span style="color:#2a2a2a"> |&gt;</span></span><span class="t" style="top:306px;font-size:5.5px;line-height:7px;color:#6e7781;font-family:'Liberation Mono', monospace;letter-spacing:-0.001px;left:47.792px;-webkit-text-stroke:0.12px;">28</span><span class="t" style="top:306px;font-size:5.5px;line-height:7px;color:#333;font-family:'Liberation Mono', monospace;letter-spacing:0.001px;left:66px;-webkit-text-stroke:0.16px;"><span style="color:#8a6a1c">  st_read</span><span style="color:#2233dd">(</span><span style="color:#1d2c8c">quiet</span><span style="color:#2a2a2a"> = </span><span style="color:#2233dd">TRUE</span><span style="color:#2233dd">)</span></span><span class="t" style="top:144px;font-size:4.8px;line-height:5px;color:#858585;letter-spacing:-0.121px;-webkit-text-stroke:0.1px;left:67px;">▷Run Cell | Run Next Cell</span><span class="t" style="top:234px;font-size:4.8px;line-height:5px;color:#858585;letter-spacing:-0.008px;-webkit-text-stroke:0.1px;left:67px;">▷Run Cell | Run Next Cell | Run Above</span><div class="a" style="left:35.8px;top:312.6px;width:367.8px;height:16.2px;background:#f6f6f6;"></div><div class="a" style="left:35.8px;top:312.4px;width:367.8px;height:0.5px;background:#e8e8e8;"></div><div class="a" style="left:35.8px;top:328.8px;width:367.8px;height:198.8px;background:#fdfdfd;"></div><span class="t" style="top:318px;font-size:5.1px;line-height:6px;color:#5a5a5a;letter-spacing:-0.137px;-webkit-text-stroke:0.1px;left:44.9px;">CONSOLE</span><span class="t" style="top:318px;font-size:5.1px;line-height:6px;color:#5a5a5a;letter-spacing:-0.109px;-webkit-text-stroke:0.1px;left:80.3px;">TERMINAL</span><span class="t" style="top:318px;font-size:5.1px;line-height:6px;color:#333;letter-spacing:-0.075px;-webkit-text-stroke:0.1px;left:116.6px;">POSIT PUBLISHER LOG</span><div class="a" style="left:116.6px;top:326.2px;width:56.3px;height:0.7px;background:#7aa6d4;"></div><span class="t" style="top:318px;font-size:5.1px;line-height:6px;color:#5a5a5a;letter-spacing:-0.104px;-webkit-text-stroke:0.1px;left:184.2px;">DEBUG CONSOLE</span><span class="t" style="top:318px;font-size:5.1px;line-height:6px;color:#5a5a5a;letter-spacing:-0.102px;-webkit-text-stroke:0.1px;left:238.4px;">PROBLEMS</span><span class="t" style="top:318px;font-size:5.1px;line-height:6px;color:#5a5a5a;letter-spacing:-0.067px;-webkit-text-stroke:0.1px;left:277px;">PORTS</span><span class="t" style="top:318px;font-size:5.1px;line-height:6px;color:#5a5a5a;letter-spacing:-0.091px;-webkit-text-stroke:0.1px;left:305px;">OUTPUT</span><div class="a" style="left:354.8px;top:320.6px;width:4.2px;height:0.5px;background:#c8c8c8;"></div><svg class="a" style="left:366.4px;top:318.2px" width="5.4" height="5.4" viewBox="0 0 5.4 5.4"><path d="M0.8 0.8l3.8 3.8M4.6 0.8l-3.8 3.8" stroke="#444" stroke-width="0.65"/></svg><svg class="a" style="left:377.4px;top:317.4px" width="6" height="6.6" viewBox="0 0 6 6.6"><rect x="0.8" y="2.6" width="4.4" height="3.2" fill="none" stroke="#888" stroke-width="0.6"/><path d="M2 2.6v-0.8a1.1 1.1 0 0 1 2.2 0" fill="none" stroke="#888" stroke-width="0.6"/></svg><div class="a" style="left:389.6px;top:317.8px;width:6px;height:6px;box-sizing:border-box;border:0.6px solid #6a6a6a;border-radius:1px"></div><svg class="a" style="left:42.0px;top:332.216px" width="5" height="3.6" viewBox="0 0 5 3.6"><path d="M0.6 0.7L2.5 2.8L4.4 0.7" fill="none" stroke="#666" stroke-width="0.6"/></svg><svg class="a" style="left:50px;top:331.416px" width="6" height="5" viewBox="0 0 6 5"><path d="M0.6 2.8L2.2 4.2L5.4 0.7" fill="none" stroke="#555" stroke-width="0.6"/></svg><span class="t" style="top:330px;font-size:6.2px;line-height:7px;color:#3a3a3a;letter-spacing:0.105px;-webkit-text-stroke:0.1px;left:59.7px;">Publish &quot;nz-quakes-quarto&quot; to https://pub.current.posit.team</span><svg class="a" style="left:51.199999999999996px;top:341.516px" width="3.6" height="5" viewBox="0 0 3.6 5"><path d="M0.8 0.6L2.8 2.5L0.8 4.4" fill="none" stroke="#666" stroke-width="0.6"/></svg><svg class="a" style="left:58.2px;top:341.416px" width="6" height="5" viewBox="0 0 6 5"><path d="M0.6 2.8L2.2 4.2L5.4 0.7" fill="none" stroke="#555" stroke-width="0.6"/></svg><span class="t" style="top:340px;font-size:6.2px;line-height:7px;color:#3a3a3a;letter-spacing:-0.024px;-webkit-text-stroke:0.1px;left:68px;">Get Package Descriptions</span><svg class="a" style="left:51.199999999999996px;top:351.516px" width="3.6" height="5" viewBox="0 0 3.6 5"><path d="M0.8 0.6L2.8 2.5L0.8 4.4" fill="none" stroke="#666" stroke-width="0.6"/></svg><svg class="a" style="left:58.2px;top:351.416px" width="6" height="5" viewBox="0 0 6 5"><path d="M0.6 2.8L2.2 4.2L5.4 0.7" fill="none" stroke="#555" stroke-width="0.6"/></svg><span class="t" style="top:350px;font-size:6.2px;line-height:7px;color:#3a3a3a;letter-spacing:-0.021px;-webkit-text-stroke:0.1px;left:68px;">Check Capabilities</span><svg class="a" style="left:51.199999999999996px;top:361.516px" width="3.6" height="5" viewBox="0 0 3.6 5"><path d="M0.8 0.6L2.8 2.5L0.8 4.4" fill="none" stroke="#666" stroke-width="0.6"/></svg><svg class="a" style="left:58.2px;top:361.416px" width="6" height="5" viewBox="0 0 6 5"><path d="M0.6 2.8L2.2 4.2L5.4 0.7" fill="none" stroke="#555" stroke-width="0.6"/></svg><span class="t" style="top:360px;font-size:6.2px;line-height:7px;color:#3a3a3a;letter-spacing:-0.014px;-webkit-text-stroke:0.1px;left:68px;">Create Bundle</span><svg class="a" style="left:51.199999999999996px;top:371.516px" width="3.6" height="5" viewBox="0 0 3.6 5"><path d="M0.8 0.6L2.8 2.5L0.8 4.4" fill="none" stroke="#666" stroke-width="0.6"/></svg><svg class="a" style="left:58.2px;top:371.416px" width="6" height="5" viewBox="0 0 6 5"><path d="M0.6 2.8L2.2 4.2L5.4 0.7" fill="none" stroke="#555" stroke-width="0.6"/></svg><span class="t" style="top:370px;font-size:6.2px;line-height:7px;color:#3a3a3a;letter-spacing:-0.033px;-webkit-text-stroke:0.1px;left:68px;">Upload Bundle</span><svg class="a" style="left:51.199999999999996px;top:381.516px" width="3.6" height="5" viewBox="0 0 3.6 5"><path d="M0.8 0.6L2.8 2.5L0.8 4.4" fill="none" stroke="#666" stroke-width="0.6"/></svg><svg class="a" style="left:58.2px;top:381.416px" width="6" height="5" viewBox="0 0 6 5"><path d="M0.6 2.8L2.2 4.2L5.4 0.7" fill="none" stroke="#555" stroke-width="0.6"/></svg><span class="t" style="top:380px;font-size:6.2px;line-height:7px;color:#3a3a3a;letter-spacing:-0.008px;-webkit-text-stroke:0.1px;left:68px;">Create Deployment Record</span><svg class="a" style="left:51.199999999999996px;top:391.516px" width="3.6" height="5" viewBox="0 0 3.6 5"><path d="M0.8 0.6L2.8 2.5L0.8 4.4" fill="none" stroke="#666" stroke-width="0.6"/></svg><svg class="a" style="left:58.2px;top:391.416px" width="6" height="5" viewBox="0 0 6 5"><path d="M0.6 2.8L2.2 4.2L5.4 0.7" fill="none" stroke="#555" stroke-width="0.6"/></svg><span class="t" style="top:390px;font-size:6.2px;line-height:7px;color:#3a3a3a;letter-spacing:-0.054px;-webkit-text-stroke:0.1px;left:68px;">Deploy Bundle</span><svg class="a" style="left:51.199999999999996px;top:402.516px" width="3.6" height="5" viewBox="0 0 3.6 5"><path d="M0.8 0.6L2.8 2.5L0.8 4.4" fill="none" stroke="#666" stroke-width="0.6"/></svg><svg class="a" style="left:58.2px;top:402.416px" width="6" height="5" viewBox="0 0 6 5"><path d="M0.6 2.8L2.2 4.2L5.4 0.7" fill="none" stroke="#555" stroke-width="0.6"/></svg><span class="t" style="top:401px;font-size:6.2px;line-height:7px;color:#3a3a3a;letter-spacing:-0.051px;-webkit-text-stroke:0.1px;left:68px;">Restore Environment</span><svg class="a" style="left:51.199999999999996px;top:412.516px" width="3.6" height="5" viewBox="0 0 3.6 5"><path d="M0.8 0.6L2.8 2.5L0.8 4.4" fill="none" stroke="#666" stroke-width="0.6"/></svg><svg class="a" style="left:58.2px;top:412.416px" width="6" height="5" viewBox="0 0 6 5"><path d="M0.6 2.8L2.2 4.2L5.4 0.7" fill="none" stroke="#555" stroke-width="0.6"/></svg><span class="t" style="top:411px;font-size:6.2px;line-height:7px;color:#3a3a3a;letter-spacing:-0.035px;-webkit-text-stroke:0.1px;left:68px;">Run Content</span><svg class="a" style="left:51.199999999999996px;top:422.516px" width="3.6" height="5" viewBox="0 0 3.6 5"><path d="M0.8 0.6L2.8 2.5L0.8 4.4" fill="none" stroke="#666" stroke-width="0.6"/></svg><svg class="a" style="left:58.2px;top:422.416px" width="6" height="5" viewBox="0 0 6 5"><path d="M0.6 2.8L2.2 4.2L5.4 0.7" fill="none" stroke="#555" stroke-width="0.6"/></svg><span class="t" style="top:421px;font-size:6.2px;line-height:7px;color:#3a3a3a;letter-spacing:-0.0px;-webkit-text-stroke:0.1px;left:68px;">Validate Deployment Record</span><span class="t" style="top:431px;font-size:6.2px;line-height:7px;color:#3a3a3a;letter-spacing:0.131px;-webkit-text-stroke:0.1px;left:57.9px;">Successfully deployed at https://pub.current.posit.team/connect/#/apps/fb0fab14-f459-484d-a8af-cdb85337c5fa</span><div class="a" style="left:35.8px;top:440.3px;width:367.8px;height:87.3px;background:#f6f6f6;"></div><div class="a" style="left:403.2px;top:30px;width:0.6px;height:497.6px;background:#e6e6e6;"></div><svg class="a" style="left:182px;top:94px;overflow:visible" width="18" height="22" viewBox="182 94 18 22"><defs><filter id="cb" x="-50%" y="-50%" width="200%" height="200%"><feGaussianBlur stdDeviation="0.8"/></filter></defs><path d="M185.5 98.6L187.8 99.4L190.6 106.4L192.2 112.2L190 112.6L186.4 107.5Z" fill="#8c8c8c" filter="url(#cb)"/><path d="M190.1 95.9L190.3 106.2L192.4 104.3L194.2 107.9L195.8 107.2L194.1 103.7L197 103.2Z" fill="#050505"/></svg><div class="a" style="left:403.8px;top:30px;width:542.2px;height:15.8px;background:#f7f7f7;"></div><span class="t" style="top:35px;font-size:5.1px;line-height:6px;color:#606060;letter-spacing:-0.193px;-webkit-text-stroke:0.1px;left:413px;">SESSION</span><span class="t" style="top:35px;font-size:5.1px;line-height:6px;color:#606060;letter-spacing:-0.084px;-webkit-text-stroke:0.1px;left:445.7px;">CONNECTIONS</span><span class="t" style="top:35px;font-size:5.1px;line-height:6px;color:#606060;letter-spacing:-0.004px;-webkit-text-stroke:0.1px;left:493.7px;">HELP</span><span class="t" style="top:35px;font-size:5.1px;line-height:6px;color:#606060;letter-spacing:-0.078px;-webkit-text-stroke:0.1px;left:518px;">HISTORY</span><span class="t" style="top:35px;font-size:5.1px;line-height:6px;color:#222;letter-spacing:-0.262px;-webkit-text-stroke:0.1px;left:551.2px;">VIEWER</span><svg class="a" style="left:920.6px;top:35px" width="6.4" height="6.4" viewBox="0 0 6.4 6.4"><path d="M0.6 2.2v-1.6h1.6M4.2 0.6h1.6v1.6M5.8 4.2v1.6h-1.6M2.2 5.8h-1.6v-1.6" fill="none" stroke="#444" stroke-width="0.65"/></svg><svg class="a" style="left:933px;top:35.4px" width="5.4" height="5.4" viewBox="0 0 5.4 5.4"><path d="M0.8 0.8l3.8 3.8M4.6 0.8l-3.8 3.8" stroke="#333" stroke-width="0.75"/></svg><div class="a" style="left:403.8px;top:45.8px;width:542.2px;height:11.2px;background:#ffffff;"></div><svg class="a" style="left:411.4px;top:49.3px" width="7.4" height="6" viewBox="0 0 7.4 6"><path d="M6.8 3H0.9M3.2 0.7L0.9 3L3.2 5.3" fill="none" stroke="#444" stroke-width="0.7"/></svg><svg class="a" style="left:423.2px;top:49.3px" width="7.4" height="6" viewBox="0 0 7.4 6"><path d="M0.6 3H6.5M4.2 0.7L6.5 3L4.2 5.3" fill="none" stroke="#444" stroke-width="0.7"/></svg><svg class="a" style="left:435.2px;top:48.9px" width="7" height="7" viewBox="0 0 7 7"><path d="M5.9 3.6a2.4 2.4 0 1 1-0.9-1.9" fill="none" stroke="#444" stroke-width="0.7"/><path d="M3.6 0.5l1.6 1.1l-1.3 1.3" fill="none" stroke="#444" stroke-width="0.6"/></svg><span class="t" style="top:49px;font-size:5.8px;line-height:6px;color:#333;letter-spacing:0.024px;-webkit-text-stroke:0.1px;left:448px;">http://localhost:5487/</span><span class="t" style="top:49px;font-size:5.8px;line-height:6px;color:#333;font-style:italic;letter-spacing:-0.103px;-webkit-text-stroke:0.1px;left:881px;">Zoom: (Auto)</span><svg class="a" style="left:917.6px;top:50.6px" width="5" height="4" viewBox="0 0 5 4"><path d="M0.6 0.8L2.5 2.9L4.4 0.8" fill="none" stroke="#444" stroke-width="0.7"/></svg><svg class="a" style="left:929.6px;top:49px" width="7" height="7" viewBox="0 0 7 7"><path d="M3 1h-2.2v5.2h5.2v-2.2M4 0.7h2.3v2.3M6.2 0.8L3.4 3.6" fill="none" stroke="#444" stroke-width="0.7"/></svg><div class="a" style="left:403.8px;top:57px;width:542.2px;height:470.6px;background:#ffffff;"></div><div class="a" style="left:403.8px;top:57px;width:542.2px;height:19.8px;background:#1a8fbe;"></div><span class="t" style="top:61px;font-size:9.9px;line-height:11px;color:#ffffff;letter-spacing:0.08px;left:412.3px;">Recent Earthquakes in Aotearoa New Zealand</span><span class="t" style="top:64px;font-size:6.8px;line-height:7px;color:#eaf4f9;letter-spacing:0.119px;left:623px;">Of Weak Intensity or Greater</span><div class="a" style="left:411.4px;top:85px;width:125.6px;height:108.7px;background:#1a8fbe;"></div><svg class="a" style="left:462px;top:94px" width="25" height="26" viewBox="0 0 25 26" fill="none" stroke="#fff" stroke-width="1.2" stroke-linecap="round"><circle cx="12.5" cy="14.3" r="9.8"/><path d="M12.5 8.6v6h-4.6M12.5 4.5v-2M10.6 2.2h3.8M19.6 6.4l1.4-1.4M20.2 4.2l1.6 1.6"/></svg><span class="t" style="top:145px;font-size:7.5px;line-height:9px;color:#ffffff;letter-spacing:0.136px;left:420px;">Hours since last earthquake</span><span class="t" style="top:159px;font-size:19px;line-height:21px;color:#ffffff;letter-spacing:-0.941px;left:420px;">25</span><div class="a" style="left:544.9px;top:85px;width:126.1px;height:108.7px;background:#ececec;"></div><svg class="a" style="left:595px;top:94px" width="27" height="20" viewBox="0 0 27 20" fill="none" stroke="#1a1a1a" stroke-width="1.3" stroke-linejoin="round" stroke-linecap="round"><path d="M0.8 11h6.4l3.2-9l5.6 16.6l3.2-7.6h6.6"/></svg><span class="t" style="top:137px;font-size:7.5px;line-height:9px;color:#333;letter-spacing:0.143px;left:553.8px;">Earthquakes in the last 24</span><span class="t" style="top:147px;font-size:7.5px;line-height:9px;color:#333;letter-spacing:-0.016px;left:553.8px;">hours</span><span class="t" style="top:161px;font-size:19px;line-height:21px;color:#222;left:553.8px;">0</span><div class="a" style="left:411.4px;top:200.8px;width:259.6px;height:319.2px;box-sizing:border-box;border:0.6px solid #e6e6e6;border-right-color:#f6f6f6;background:#fff"></div><span class="t" style="top:222px;font-size:9.3px;line-height:10px;color:#333;letter-spacing:0.307px;left:420.4px;">Last 10 Earthquakes</span><span class="t" style="top:238px;font-size:7.4px;line-height:9px;color:#222;font-weight:700;letter-spacing:0.581px;left:423.8px;">Magnitude</span><span class="t" style="top:238px;font-size:7.4px;line-height:9px;color:#222;font-weight:700;letter-spacing:0.358px;left:568.7px;">Location</span><span class="t" style="top:238px;font-size:7.4px;line-height:9px;color:#222;font-weight:700;letter-spacing:0.637px;left:636.5px;">Depth</span><div class="a" style="left:420.2px;top:249.2px;width:242.8px;height:0.6px;background:#e2e2e2;"></div><div class="a" style="left:468.5px;top:249.7px;width:194.5px;height:38.9px;background:#f7f7f7;"></div><div class="a" style="left:420.2px;top:249.7px;width:48.3px;height:38.9px;background:#912667;"></div><span class="t" style="top:254px;font-size:7.2px;line-height:9px;color:#fff;font-weight:700;letter-spacing:0.1px;left:455.2px;">2.4</span><span class="t" style="top:254px;font-size:7.8px;line-height:9px;color:#2a2a2a;letter-spacing:0.239px;left:471.3px;">Yesterday</span><span class="t" style="top:254px;font-size:7.8px;line-height:9px;color:#2a2a2a;letter-spacing:0.092px;left:519.7px;">02:43 AM</span><span class="t" style="top:254px;font-size:7.8px;line-height:9px;color:#2a2a2a;letter-spacing:0.092px;left:568.7px;">5 km north-</span><span class="t" style="top:265px;font-size:7.8px;line-height:9px;color:#2a2a2a;letter-spacing:0.092px;left:568.7px;">east of</span><span class="t" style="top:277px;font-size:7.8px;line-height:9px;color:#2a2a2a;letter-spacing:0.092px;left:568.7px;">Wairoa</span><span class="t" style="top:254px;font-size:7.8px;line-height:9px;color:#2a2a2a;letter-spacing:0.092px;right:300.09px;">22 km</span><div class="a" style="left:420.2px;top:288.6px;width:48.3px;height:62.1px;background:#912667;"></div><span class="t" style="top:293px;font-size:7.2px;line-height:9px;color:#fff;font-weight:700;letter-spacing:0.1px;left:455.2px;">2.8</span><span class="t" style="top:293px;font-size:7.8px;line-height:9px;color:#2a2a2a;letter-spacing:0.239px;left:471.3px;">Yesterday</span><span class="t" style="top:293px;font-size:7.8px;line-height:9px;color:#2a2a2a;letter-spacing:0.092px;left:519.7px;">01:00 AM</span><span class="t" style="top:293px;font-size:7.8px;line-height:9px;color:#2a2a2a;letter-spacing:0.092px;left:568.7px;">20 km</span><span class="t" style="top:304px;font-size:7.8px;line-height:9px;color:#2a2a2a;letter-spacing:0.092px;left:568.7px;">south-west</span><span class="t" style="top:316px;font-size:7.8px;line-height:9px;color:#2a2a2a;letter-spacing:0.092px;left:568.7px;">of</span><span class="t" style="top:328px;font-size:7.8px;line-height:9px;color:#2a2a2a;letter-spacing:0.092px;left:568.7px;">Waipukura</span><span class="t" style="top:339px;font-size:7.8px;line-height:9px;color:#2a2a2a;letter-spacing:0.092px;left:568.7px;">u</span><span class="t" style="top:293px;font-size:7.8px;line-height:9px;color:#2a2a2a;letter-spacing:0.092px;right:300.09px;">19 km</span><div class="a" style="left:468.5px;top:350.7px;width:194.5px;height:38.9px;background:#f7f7f7;"></div><div class="a" style="left:420.2px;top:350.7px;width:48.3px;height:38.9px;background:#912667;"></div><span class="t" style="top:355px;font-size:7.2px;line-height:9px;color:#fff;font-weight:700;letter-spacing:0.1px;left:455.2px;">2.9</span><span class="t" style="top:355px;font-size:7.8px;line-height:9px;color:#2a2a2a;letter-spacing:0.049px;left:471.3px;">2 days ago</span><span class="t" style="top:355px;font-size:7.8px;line-height:9px;color:#2a2a2a;letter-spacing:0.092px;left:519.7px;">08:21 AM</span><span class="t" style="top:355px;font-size:7.8px;line-height:9px;color:#2a2a2a;letter-spacing:0.092px;left:568.7px;">25 km</span><span class="t" style="top:366px;font-size:7.8px;line-height:9px;color:#2a2a2a;letter-spacing:0.092px;left:568.7px;">south-east</span><span class="t" style="top:378px;font-size:7.8px;line-height:9px;color:#2a2a2a;letter-spacing:0.092px;left:568.7px;">of Cheviot</span><span class="t" style="top:355px;font-size:7.8px;line-height:9px;color:#2a2a2a;letter-spacing:0.092px;right:300.09px;">21 km</span><div class="a" style="left:420.2px;top:389.6px;width:48.3px;height:38.8px;background:#dc523a;"></div><span class="t" style="top:394px;font-size:7.2px;line-height:9px;color:#fff;font-weight:700;letter-spacing:0.1px;left:455.2px;">3.7</span><span class="t" style="top:394px;font-size:7.8px;line-height:9px;color:#2a2a2a;letter-spacing:0.049px;left:471.3px;">2 days ago</span><span class="t" style="top:394px;font-size:7.8px;line-height:9px;color:#2a2a2a;letter-spacing:0.092px;left:519.7px;">05:22 AM</span><span class="t" style="top:394px;font-size:7.8px;line-height:9px;color:#2a2a2a;letter-spacing:0.092px;left:568.7px;">5 km south-</span><span class="t" style="top:405px;font-size:7.8px;line-height:9px;color:#2a2a2a;letter-spacing:0.092px;left:568.7px;">east of</span><span class="t" style="top:417px;font-size:7.8px;line-height:9px;color:#2a2a2a;letter-spacing:0.092px;left:568.7px;">Wairoa</span><span class="t" style="top:394px;font-size:7.8px;line-height:9px;color:#2a2a2a;letter-spacing:0.092px;right:300.09px;">28 km</span><div class="a" style="left:468.5px;top:428.4px;width:194.5px;height:38.9px;background:#f7f7f7;"></div><div class="a" style="left:420.2px;top:428.4px;width:48.3px;height:38.9px;background:#dc523a;"></div><span class="t" style="top:432px;font-size:7.2px;line-height:9px;color:#fff;font-weight:700;letter-spacing:0.1px;left:455.2px;">3.7</span><span class="t" style="top:432px;font-size:7.8px;line-height:9px;color:#2a2a2a;letter-spacing:0.049px;left:471.3px;">2 days ago</span><span class="t" style="top:432px;font-size:7.8px;line-height:9px;color:#2a2a2a;letter-spacing:0.092px;left:519.7px;">03:45 AM</span><span class="t" style="top:432px;font-size:7.8px;line-height:9px;color:#2a2a2a;letter-spacing:0.092px;left:568.7px;">10 km</span><span class="t" style="top:444px;font-size:7.8px;line-height:9px;color:#2a2a2a;letter-spacing:0.092px;left:568.7px;">north of</span><span class="t" style="top:456px;font-size:7.8px;line-height:9px;color:#2a2a2a;letter-spacing:0.092px;left:568.7px;">Methven</span><span class="t" style="top:432px;font-size:7.8px;line-height:9px;color:#2a2a2a;letter-spacing:0.092px;right:300.09px;">9 km</span><div class="a" style="left:420.2px;top:467.3px;width:48.3px;height:25.5px;background:#912667;"></div><span class="t" style="top:471px;font-size:7.2px;line-height:9px;color:#fff;font-weight:700;letter-spacing:0.1px;left:455.2px;">2.9</span><span class="t" style="top:471px;font-size:7.8px;line-height:9px;color:#2a2a2a;letter-spacing:0.049px;left:471.3px;">2 days ago</span><span class="t" style="top:471px;font-size:7.8px;line-height:9px;color:#2a2a2a;letter-spacing:0.092px;left:519.7px;">02:27 AM</span><span class="t" style="top:471px;font-size:7.8px;line-height:9px;color:#2a2a2a;letter-spacing:0.092px;left:568.7px;">10 km</span><span class="t" style="top:483px;font-size:7.8px;line-height:9px;color:#2a2a2a;letter-spacing:0.092px;left:568.7px;">north-east</span><span class="t" style="top:471px;font-size:7.8px;line-height:9px;color:#2a2a2a;letter-spacing:0.092px;right:300.09px;">10 km</span><span class="t" style="top:495px;font-size:6.2px;line-height:7px;color:#555;letter-spacing:0.126px;-webkit-text-stroke:0.1px;left:419.9px;">Retrieved from the <span style="color:#1a8fbe;text-decoration:underline">GeoNet API</span> at 2026/04/04 03:51 NZDT</span><div class="a" style="left:679.2px;top:85px;width:259.3px;height:435.3px;box-sizing:border-box;border:0.6px solid #ececec;background:#fff"></div><div class="a" style="left:679.8px;top:85.6px;width:258.2px;height:19.2px;background:#f7f7f7;"></div><div class="a" style="left:679.8px;top:104.6px;width:258.2px;height:0.6px;background:#ebebeb;"></div><span class="t" style="top:91px;font-size:7.8px;line-height:9px;color:#1a1a1a;letter-spacing:0.12px;left:687.5px;">100 Most Recent Earthquakes</span><svg class="a" style="left:687px;top:113.2px" width="243" height="398.5" viewBox="687 113.2 243 398.5"><defs><filter id="mb" x="-5%" y="-5%" width="110%" height="110%"><feGaussianBlur stdDeviation="0.35"/></filter><filter id="cb2" x="-30%" y="-30%" width="160%" height="160%"><feGaussianBlur stdDeviation="0.3"/></filter></defs><rect x="687" y="113.2" width="243" height="398.5" fill="#cdcdd2"/><g filter="url(#mb)"><polygon points="699,152.7 702,149.5 706,146 707.6,139 711,136 713.5,134.8 716,137.6 720,141 724,142 728.5,145 732,147.5 735,149 738,153 742,155 746,158.5 749,156 752,154 753,157 753.6,160 756,167 758.7,173.6 762,182 763,187 760,190 762,195 764.4,196.2 768.1,203.6 772.8,211 774.6,216.6 770.9,219.4 770,225 771.8,231.5 773.7,236.1 778.3,234.3 782,235.6 785.8,235.2 788.6,234.3 789.5,238.9 791.3,244.5 793.2,250 794.1,255.6 797.8,257.5 801.6,255.6 802.5,250 799.7,244.5 796.9,238.9 797.8,233.3 799.7,229.6 796,225 794.1,221.2 796.9,219.4 801.6,223.1 805.3,229.6 809,232.4 812.7,226.8 814.6,228.7 811.8,233.3 813.6,238.9 816.4,246.3 818.3,255.6 819.2,264.9 820.4,270 823.5,278 830,282.3 841.2,287.9 852.3,293.5 863.5,298.1 874.6,300 882,297.2 887.6,291.6 893.2,284.2 898.8,280.4 904.3,276.7 911.8,275.2 919.2,275.8 925.7,277.7 928.1,282.3 926.7,289.7 923.9,297.2 922.6,306.5 921.1,315.8 918.8,323.2 914.6,330.6 909,336.2 904.3,339.9 902.9,347.4 902.1,354.8 905.2,359.6 904,364 901,367.2 898.6,364 897.6,358.8 890.5,355.9 880.4,357.5 872,360.9 865.4,366.7 860.3,373.4 860.3,380 865.4,386 867,389 863.7,395 862,403.5 858.7,413.6 855.9,417.4 852.2,423 847.6,430.4 841.1,437.9 834.6,445.3 830.9,450.9 827.1,458.3 824.3,465.8 821.6,472.3 816.9,477.8 811.3,483.4 805.8,488.1 800.2,492.7 795.5,495.9 791.3,495.9 790,491.8 788.1,487.1 784.4,485.8 779.7,484.3 776,481.6 772.3,479.7 766.7,481.6 764.9,477.8 768.6,473.2 772.3,467.6 776,462 779.7,454.6 783.5,447.2 787.2,437.9 789,428.6 789.4,419.3 788,413 783.8,408.6 777,401.9 770.4,399.4 762,396.9 755.3,391.8 748.6,386 738.6,382.6 732,376.8 728.5,370 730,365 737,358.4 747,353.3 753.6,350 760,345 763.7,337 764.5,325 768,317 767,308.5 771,303.5 770.4,291.8 773,286.7 771,278 767,265 763.7,257 760,248.6 757.8,240 752,228.5 746,217.6 740,215 738.6,206.7 732,198.4 726,190 720,182 714,173 708,165 703,158" fill="#f4f4f5"/><polygon points="687,113 697.5,113 699.5,118 702.5,128 705,140 706,146 702,149.5 699,152.7 697,146 694.5,134 693,124 691,117.5 687,116" fill="#f4f4f5"/><polygon points="687,451 690,450.6 695.4,450.4 699,454 699,463.7 700.3,474.8 706,481.8 709.4,477.6 717,469.3 724,463.7 729.6,456.7 732.4,449.8 736.5,446.3 736.8,452.5 738.6,456.7 740.7,460.5 746.3,460.9 750.5,464.4 754.7,468.6 751.9,473.4 743.5,477.6 740.7,483.2 740.7,488.8 744.9,495.7 747,499.9 744.9,503.4 746.3,506.9 744.9,511.7 687,511.7" fill="#f4f4f5"/><polygon points="794,199.5 796,197.8 798.5,198.5 799.5,202 801.5,205 803.4,208.5 802.8,212.5 800.5,212 798.5,208.5 796.5,205.5 794.5,203" fill="#f4f4f5"/><circle cx="783.4" cy="205.4" r="1.5" fill="#f4f4f5"/><circle cx="777.2" cy="452.6" r="0.9" fill="#f4f4f5"/><polygon points="741,213.5 743,208.5 746.5,205.5 750,205.5 751.5,209 749,212.5 752,216.5 756,222.5 755,224.5 751,220.5 747.5,216 744,216.5" fill="#d6d6da"/><polygon points="761.5,250.5 765,247 770,244.5 775.5,245.5 777,249 773,252.5 768,254 764,253.2" fill="#cfd0d4"/><path d="M739.5,459.5L735,465L730.5,470.5" fill="none" stroke="#cfd0d5" stroke-width="1.3" stroke-linecap="round"/><path d="M745,462.5L740,468.5L734.5,474.5" fill="none" stroke="#cfd0d5" stroke-width="1.3" stroke-linecap="round"/><path d="M750.5,466.5L745.5,471.5L739.5,476.5" fill="none" stroke="#cfd0d5" stroke-width="1.3" stroke-linecap="round"/><path d="M734.6,450L732.6,456L729.5,461" fill="none" stroke="#cfd0d5" stroke-width="1.3" stroke-linecap="round"/></g><path d="M771,262 L780,266 L790,262 L800,266 L812,262" fill="none" stroke="#dedede" stroke-width="0.5"/><path d="M812,262 L816,280 L822,296 L832,306 L838,322 L846,336 L840,350" fill="none" stroke="#dedede" stroke-width="0.5"/><path d="M766,330 L778,326 L790,330 L800,338 L806,352 L812,362 L808,374" fill="none" stroke="#dedede" stroke-width="0.5"/><path d="M748,386 L760,380 L772,384 L782,394 L790,398" fill="none" stroke="#dedede" stroke-width="0.5"/><path d="M838,322 L852,314 L866,316 L878,308 L888,296" fill="none" stroke="#dedede" stroke-width="0.5"/><path d="M866,316 L872,332 L884,344 L898,346" fill="none" stroke="#dedede" stroke-width="0.5"/><path d="M808,374 L822,380 L834,376 L840,350" fill="none" stroke="#dedede" stroke-width="0.5"/><path d="M834,376 L832,396 L830,416 L826,436" fill="none" stroke="#dedede" stroke-width="0.5"/><path d="M788,446 L800,442 L812,446 L826,440 L838,444" fill="none" stroke="#dedede" stroke-width="0.5"/><path d="M840,350 L852,346 L862,352 L872,360" fill="none" stroke="#dedede" stroke-width="0.5"/><path d="M701,479 L716,486 L730,484 L742,489" fill="none" stroke="#dedede" stroke-width="0.5"/><path d="M687,470 L694,476 L701,479" fill="none" stroke="#dedede" stroke-width="0.5"/><path d="M687,226.4H930M687,353H930M687,461.4H930M871.4,113.2V511.7" stroke="#d3d4d8" stroke-width="0.4" fill="none"/><text x="717" y="170.79999999999998" font-family="Liberation Serif, serif" font-size="4.6" fill="#bababa" textLength="35" lengthAdjust="spacing">NORTHLAND</text><text x="788" y="303.40000000000003" font-family="Liberation Serif, serif" font-size="4.6" fill="#bababa" textLength="25.5" lengthAdjust="spacing">WAIKATO</text><text x="838" y="312.0" font-family="Liberation Serif, serif" font-size="4.6" fill="#bababa" textLength="46" lengthAdjust="spacing">BAY OF PLENTY</text><text x="884" y="321.8" font-family="Liberation Serif, serif" font-size="4.6" fill="#bababa" textLength="29.5" lengthAdjust="spacing">GISBORNE</text><text x="831" y="359.6" font-family="Liberation Serif, serif" font-size="4.6" fill="#bababa" textLength="40" lengthAdjust="spacing">HAWKE&#x27;S BAY</text><text x="737" y="372.20000000000005" font-family="Liberation Serif, serif" font-size="4.6" fill="#bababa" textLength="30" lengthAdjust="spacing">TARANAKI</text><text x="784" y="390.0" font-family="Liberation Serif, serif" font-size="4.6" fill="#bababa" textLength="35" lengthAdjust="spacing">MANAWATU</text><text x="786.5" y="396.0" font-family="Liberation Serif, serif" font-size="4.6" fill="#bababa" textLength="32.5" lengthAdjust="spacing">WANGANUI</text><text x="786" y="455.0" font-family="Liberation Serif, serif" font-size="4.6" fill="#bababa" textLength="39" lengthAdjust="spacing">WELLINGTON</text><text x="781" y="470.40000000000003" font-family="Liberation Serif, serif" font-size="4.6" fill="#bababa" textLength="38.5" lengthAdjust="spacing">WELLINGTON</text><text x="698" y="504.40000000000003" font-family="Liberation Serif, serif" font-size="4.6" fill="#bababa" textLength="46.5" lengthAdjust="spacing">MARLBOROUGH</text><text x="688" y="497.6" font-family="Liberation Serif, serif" font-size="4.6" fill="#bababa" textLength="7" lengthAdjust="spacing">AN</text><text x="838" y="274" font-family="Liberation Serif, serif" font-style="italic" font-size="5.6" fill="#a9aab2" textLength="36" lengthAdjust="spacing">Bay of Plenty</text><text x="746" y="492.8" font-family="Liberation Serif, serif" font-style="italic" font-size="4.8" fill="#a2a3aa" textLength="30" lengthAdjust="spacing">Cook Strait</text><g filter="url(#cb2)"><circle cx="713.5" cy="244" r="3.96" fill="#f1ee85" fill-opacity="0.62" stroke="#f1ee85" stroke-width="0.3" stroke-opacity="0.8"/><circle cx="888.5" cy="265.6" r="2.38" fill="#fbb040" fill-opacity="0.62" stroke="#fbb040" stroke-width="0.3" stroke-opacity="0.8"/><circle cx="903.3" cy="269.6" r="3.34" fill="#fbb040" fill-opacity="0.62" stroke="#fbb040" stroke-width="0.3" stroke-opacity="0.8"/><circle cx="922" cy="269" r="2.46" fill="#e2745c" fill-opacity="0.62" stroke="#e2745c" stroke-width="0.3" stroke-opacity="0.8"/><circle cx="918" cy="272.8" r="0.97" fill="#9c3a7c" fill-opacity="0.62" stroke="#9c3a7c" stroke-width="0.3" stroke-opacity="0.8"/><circle cx="885.4" cy="286.7" r="1.58" fill="#ee8c78" fill-opacity="0.62" stroke="#ee8c78" stroke-width="0.3" stroke-opacity="0.8"/><circle cx="903.3" cy="289.7" r="2.46" fill="#ee8c78" fill-opacity="0.62" stroke="#ee8c78" stroke-width="0.3" stroke-opacity="0.8"/><circle cx="916" cy="289" r="0.7" fill="#9c3a7c" fill-opacity="0.62" stroke="#9c3a7c" stroke-width="0.3" stroke-opacity="0.8"/><circle cx="925" cy="290.4" r="1.14" fill="#9c3a7c" fill-opacity="0.62" stroke="#9c3a7c" stroke-width="0.3" stroke-opacity="0.8"/><circle cx="850" cy="306.3" r="2.64" fill="#fbb040" fill-opacity="0.62" stroke="#fbb040" stroke-width="0.3" stroke-opacity="0.8"/><circle cx="876.6" cy="305" r="1.58" fill="#ee8c78" fill-opacity="0.62" stroke="#ee8c78" stroke-width="0.3" stroke-opacity="0.8"/><circle cx="880.6" cy="317" r="2.46" fill="#ee8c78" fill-opacity="0.62" stroke="#ee8c78" stroke-width="0.3" stroke-opacity="0.8"/><circle cx="884" cy="319.5" r="1.06" fill="#9c3a7c" fill-opacity="0.62" stroke="#9c3a7c" stroke-width="0.3" stroke-opacity="0.8"/><circle cx="829.2" cy="319.4" r="2.2" fill="#ee8c78" fill-opacity="0.62" stroke="#ee8c78" stroke-width="0.3" stroke-opacity="0.8"/><circle cx="785.7" cy="324.4" r="1.14" fill="#9c3a7c" fill-opacity="0.62" stroke="#9c3a7c" stroke-width="0.3" stroke-opacity="0.8"/><circle cx="873" cy="327.2" r="2.02" fill="#ee8c78" fill-opacity="0.62" stroke="#ee8c78" stroke-width="0.3" stroke-opacity="0.8"/><circle cx="892.3" cy="336.4" r="1.58" fill="#ee8c78" fill-opacity="0.62" stroke="#ee8c78" stroke-width="0.3" stroke-opacity="0.8"/><circle cx="870" cy="340.3" r="2.02" fill="#ee8c78" fill-opacity="0.62" stroke="#ee8c78" stroke-width="0.3" stroke-opacity="0.8"/><circle cx="876" cy="341.8" r="2.46" fill="#ee8c78" fill-opacity="0.62" stroke="#ee8c78" stroke-width="0.3" stroke-opacity="0.8"/><circle cx="814.5" cy="350" r="1.23" fill="#9c3a7c" fill-opacity="0.62" stroke="#9c3a7c" stroke-width="0.3" stroke-opacity="0.8"/><circle cx="841.8" cy="353.7" r="2.9" fill="#fbb040" fill-opacity="0.62" stroke="#fbb040" stroke-width="0.3" stroke-opacity="0.8"/><circle cx="883.6" cy="353" r="2.2" fill="#b8323c" fill-opacity="0.62" stroke="#b8323c" stroke-width="0.3" stroke-opacity="0.8"/><circle cx="882.4" cy="357.2" r="1.76" fill="#ee8c78" fill-opacity="0.62" stroke="#ee8c78" stroke-width="0.3" stroke-opacity="0.8"/><circle cx="873.2" cy="362.9" r="1.58" fill="#ee8c78" fill-opacity="0.62" stroke="#ee8c78" stroke-width="0.3" stroke-opacity="0.8"/><circle cx="895" cy="361.7" r="1.76" fill="#b8323c" fill-opacity="0.62" stroke="#b8323c" stroke-width="0.3" stroke-opacity="0.8"/><circle cx="865.2" cy="375" r="1.94" fill="#ee8c78" fill-opacity="0.62" stroke="#ee8c78" stroke-width="0.3" stroke-opacity="0.8"/><circle cx="896" cy="380" r="1.76" fill="#e2745c" fill-opacity="0.62" stroke="#e2745c" stroke-width="0.3" stroke-opacity="0.8"/><circle cx="870.4" cy="382.6" r="1.06" fill="#9c3a7c" fill-opacity="0.62" stroke="#9c3a7c" stroke-width="0.3" stroke-opacity="0.8"/><circle cx="859.7" cy="386.3" r="1.32" fill="#9c3a7c" fill-opacity="0.62" stroke="#9c3a7c" stroke-width="0.3" stroke-opacity="0.8"/><circle cx="868.2" cy="395.7" r="1.94" fill="#e2745c" fill-opacity="0.62" stroke="#e2745c" stroke-width="0.3" stroke-opacity="0.8"/><circle cx="798" cy="404.9" r="1.14" fill="#9c3a7c" fill-opacity="0.62" stroke="#9c3a7c" stroke-width="0.3" stroke-opacity="0.8"/><circle cx="779.4" cy="413.6" r="1.5" fill="#e2745c" fill-opacity="0.62" stroke="#e2745c" stroke-width="0.3" stroke-opacity="0.8"/><circle cx="826.9" cy="411.3" r="2.11" fill="#ee8c78" fill-opacity="0.62" stroke="#ee8c78" stroke-width="0.3" stroke-opacity="0.8"/><circle cx="836.4" cy="413.3" r="1.14" fill="#9c3a7c" fill-opacity="0.62" stroke="#9c3a7c" stroke-width="0.3" stroke-opacity="0.8"/><circle cx="840.3" cy="410.8" r="1.06" fill="#9c3a7c" fill-opacity="0.62" stroke="#9c3a7c" stroke-width="0.3" stroke-opacity="0.8"/><circle cx="842.3" cy="408.9" r="0.62" fill="#9c3a7c" fill-opacity="0.62" stroke="#9c3a7c" stroke-width="0.3" stroke-opacity="0.8"/><circle cx="828.5" cy="421" r="0.62" fill="#9c3a7c" fill-opacity="0.62" stroke="#9c3a7c" stroke-width="0.3" stroke-opacity="0.8"/><circle cx="832" cy="422.5" r="1.06" fill="#9c3a7c" fill-opacity="0.62" stroke="#9c3a7c" stroke-width="0.3" stroke-opacity="0.8"/><circle cx="835.4" cy="422.3" r="1.06" fill="#9c3a7c" fill-opacity="0.62" stroke="#9c3a7c" stroke-width="0.3" stroke-opacity="0.8"/><circle cx="845.8" cy="422.3" r="0.62" fill="#9c3a7c" fill-opacity="0.62" stroke="#9c3a7c" stroke-width="0.3" stroke-opacity="0.8"/><circle cx="851" cy="424" r="1.14" fill="#9c3a7c" fill-opacity="0.62" stroke="#9c3a7c" stroke-width="0.3" stroke-opacity="0.8"/><circle cx="852.5" cy="426" r="0.7" fill="#b8323c" fill-opacity="0.62" stroke="#b8323c" stroke-width="0.3" stroke-opacity="0.8"/><circle cx="834.4" cy="430.3" r="1.06" fill="#9c3a7c" fill-opacity="0.62" stroke="#9c3a7c" stroke-width="0.3" stroke-opacity="0.8"/><circle cx="810" cy="433" r="1.06" fill="#9c3a7c" fill-opacity="0.62" stroke="#9c3a7c" stroke-width="0.3" stroke-opacity="0.8"/><circle cx="820.5" cy="435" r="1.58" fill="#9c3a7c" fill-opacity="0.62" stroke="#9c3a7c" stroke-width="0.3" stroke-opacity="0.8"/><circle cx="824.9" cy="433.4" r="2.02" fill="#e2745c" fill-opacity="0.62" stroke="#e2745c" stroke-width="0.3" stroke-opacity="0.8"/><circle cx="824" cy="436.1" r="1.58" fill="#9c3a7c" fill-opacity="0.62" stroke="#9c3a7c" stroke-width="0.3" stroke-opacity="0.8"/><circle cx="828" cy="441.4" r="0.62" fill="#9c3a7c" fill-opacity="0.62" stroke="#9c3a7c" stroke-width="0.3" stroke-opacity="0.8"/><circle cx="809.7" cy="443.9" r="0.62" fill="#9c3a7c" fill-opacity="0.62" stroke="#9c3a7c" stroke-width="0.3" stroke-opacity="0.8"/><circle cx="812.2" cy="450.6" r="2.02" fill="#e2745c" fill-opacity="0.62" stroke="#e2745c" stroke-width="0.3" stroke-opacity="0.8"/><circle cx="815" cy="449.7" r="0.97" fill="#9c3a7c" fill-opacity="0.62" stroke="#9c3a7c" stroke-width="0.3" stroke-opacity="0.8"/><circle cx="778.7" cy="459" r="2.2" fill="#e2745c" fill-opacity="0.62" stroke="#e2745c" stroke-width="0.3" stroke-opacity="0.8"/><circle cx="782.8" cy="465.6" r="1.06" fill="#9c3a7c" fill-opacity="0.62" stroke="#9c3a7c" stroke-width="0.3" stroke-opacity="0.8"/><circle cx="798.2" cy="471.7" r="2.38" fill="#fbb040" fill-opacity="0.62" stroke="#fbb040" stroke-width="0.3" stroke-opacity="0.8"/><circle cx="751" cy="495.8" r="2.64" fill="#fbb040" fill-opacity="0.62" stroke="#fbb040" stroke-width="0.3" stroke-opacity="0.8"/><circle cx="753.8" cy="495" r="2.11" fill="#ee8c78" fill-opacity="0.62" stroke="#ee8c78" stroke-width="0.3" stroke-opacity="0.8"/><circle cx="749.4" cy="496.6" r="1.14" fill="#9c3a7c" fill-opacity="0.62" stroke="#9c3a7c" stroke-width="0.3" stroke-opacity="0.8"/><circle cx="755.6" cy="494.6" r="0.88" fill="#9c3a7c" fill-opacity="0.62" stroke="#9c3a7c" stroke-width="0.3" stroke-opacity="0.8"/><circle cx="726.5" cy="499" r="1.58" fill="#ee8c78" fill-opacity="0.62" stroke="#ee8c78" stroke-width="0.3" stroke-opacity="0.8"/><circle cx="719" cy="507.8" r="2.02" fill="#ee8c78" fill-opacity="0.62" stroke="#ee8c78" stroke-width="0.3" stroke-opacity="0.8"/><circle cx="742.3" cy="503.6" r="0.62" fill="#9c3a7c" fill-opacity="0.62" stroke="#9c3a7c" stroke-width="0.3" stroke-opacity="0.8"/><circle cx="921.3" cy="269" r="1.06" fill="#9c3a7c" fill-opacity="0.62" stroke="#9c3a7c" stroke-width="0.3" stroke-opacity="0.8"/><circle cx="883" cy="352" r="1.06" fill="#9c3a7c" fill-opacity="0.62" stroke="#9c3a7c" stroke-width="0.3" stroke-opacity="0.8"/><circle cx="895.6" cy="361.2" r="0.88" fill="#9c3a7c" fill-opacity="0.62" stroke="#9c3a7c" stroke-width="0.3" stroke-opacity="0.8"/></g></svg><div class="a" style="left:692.2px;top:117.4px;width:14.2px;height:29.4px;box-sizing:border-box;border:0.7px solid #bcbcbc;border-radius:1.2px;background:#fff"></div><div class="a" style="left:693px;top:131.8px;width:13px;height:0.5px;background:#d8d8d8;"></div><div class="a" style="left:696.9px;top:124.9px;width:5.4px;height:1.1px;background:#1a1a1a;"></div><div class="a" style="left:699px;top:122.8px;width:1.1px;height:5.3px;background:#1a1a1a;"></div><div class="a" style="left:696.9px;top:138.9px;width:5.4px;height:1.1px;background:#1a1a1a;"></div><div class="a" style="left:886px;top:117.3px;width:40px;height:64.7px;border-radius:2px;background:rgba(255,255,255,0.86);box-shadow:0 0 2px rgba(0,0,0,0.25)"></div><span class="t" style="top:120px;font-size:6.4px;line-height:7px;color:#333;font-weight:700;letter-spacing:0.056px;left:890px;">Magnitude</span><div class="a" style="left:890px;top:129.8px;width:8px;height:8.25px;background:#7b7b7b;"></div><span class="t" style="top:130px;font-size:6.4px;line-height:7px;color:#333;letter-spacing:-0.047px;-webkit-text-stroke:0.1px;left:901.8px;">&lt;1</span><div class="a" style="left:890px;top:138.0px;width:8px;height:8.25px;background:#9f85b9;"></div><span class="t" style="top:138px;font-size:6.4px;line-height:7px;color:#bdbdbd;letter-spacing:-0.047px;-webkit-text-stroke:0.1px;left:901.8px;">1</span><div class="a" style="left:890px;top:146.20000000000002px;width:8px;height:8.25px;background:#c58fb1;"></div><span class="t" style="top:147px;font-size:6.4px;line-height:7px;color:#333;letter-spacing:-0.047px;-webkit-text-stroke:0.1px;left:901.8px;">2</span><div class="a" style="left:890px;top:154.4px;width:8px;height:8.25px;background:#eea69b;"></div><span class="t" style="top:155px;font-size:6.4px;line-height:7px;color:#333;letter-spacing:-0.047px;-webkit-text-stroke:0.1px;left:901.8px;">3</span><div class="a" style="left:890px;top:162.60000000000002px;width:8px;height:8.25px;background:#fcd084;"></div><span class="t" style="top:163px;font-size:6.4px;line-height:7px;color:#333;letter-spacing:-0.047px;-webkit-text-stroke:0.1px;left:901.8px;">4</span><div class="a" style="left:890px;top:170.8px;width:8px;height:8.25px;background:#fbfcc0;"></div><span class="t" style="top:171px;font-size:6.4px;line-height:7px;color:#333;letter-spacing:-0.047px;-webkit-text-stroke:0.1px;left:901.8px;">&gt;5</span><div class="a" style="left:911.2px;top:504px;width:18.8px;height:7.7px;background:rgba(255,255,255,0.85);"></div><span class="t" style="top:505px;font-size:5.8px;line-height:6px;color:#1a78b8;font-weight:700;letter-spacing:-0.165px;left:912.8px;">Leaflet</span><div class="a" style="left:919.5px;top:500.6px;width:15.6px;height:15.6px;box-sizing:border-box;border:0.5px solid #a6a6a6;border-radius:50%;background:rgba(255,255,255,0.92)"></div><svg class="a" style="left:924.4px;top:505.2px" width="6" height="6" viewBox="0 0 6 6"><path d="M3.4 0.8h1.8v1.8M5.2 0.8L3 3M2.4 5.2h-1.6v-1.6" fill="none" stroke="#333" stroke-width="0.6"/></svg><svg class="a" style="left:14px;top:0" width="2.4" height="2.4" viewBox="0 0 2.4 2.4"><path d="M0 0H2.4A2.4 2.4 0 0 0 0 2.4Z" fill="#000"/></svg><svg class="a" style="left:943.6px;top:0" width="2.4" height="2.4" viewBox="0 0 2.4 2.4"><path d="M2.4 0H0A2.4 2.4 0 0 1 2.4 2.4Z" fill="#000"/></svg><svg class="a" style="left:14px;top:535.6px" width="2.4" height="2.4" viewBox="0 0 2.4 2.4"><path d="M0 2.4H2.4A2.4 2.4 0 0 1 0 0Z" fill="#000"/></svg><svg class="a" style="left:943.6px;top:535.6px" width="2.4" height="2.4" viewBox="0 0 2.4 2.4"><path d="M2.4 2.4H0A2.4 2.4 0 0 0 2.4 0Z" fill="#000"/></svg></div></body></html>
